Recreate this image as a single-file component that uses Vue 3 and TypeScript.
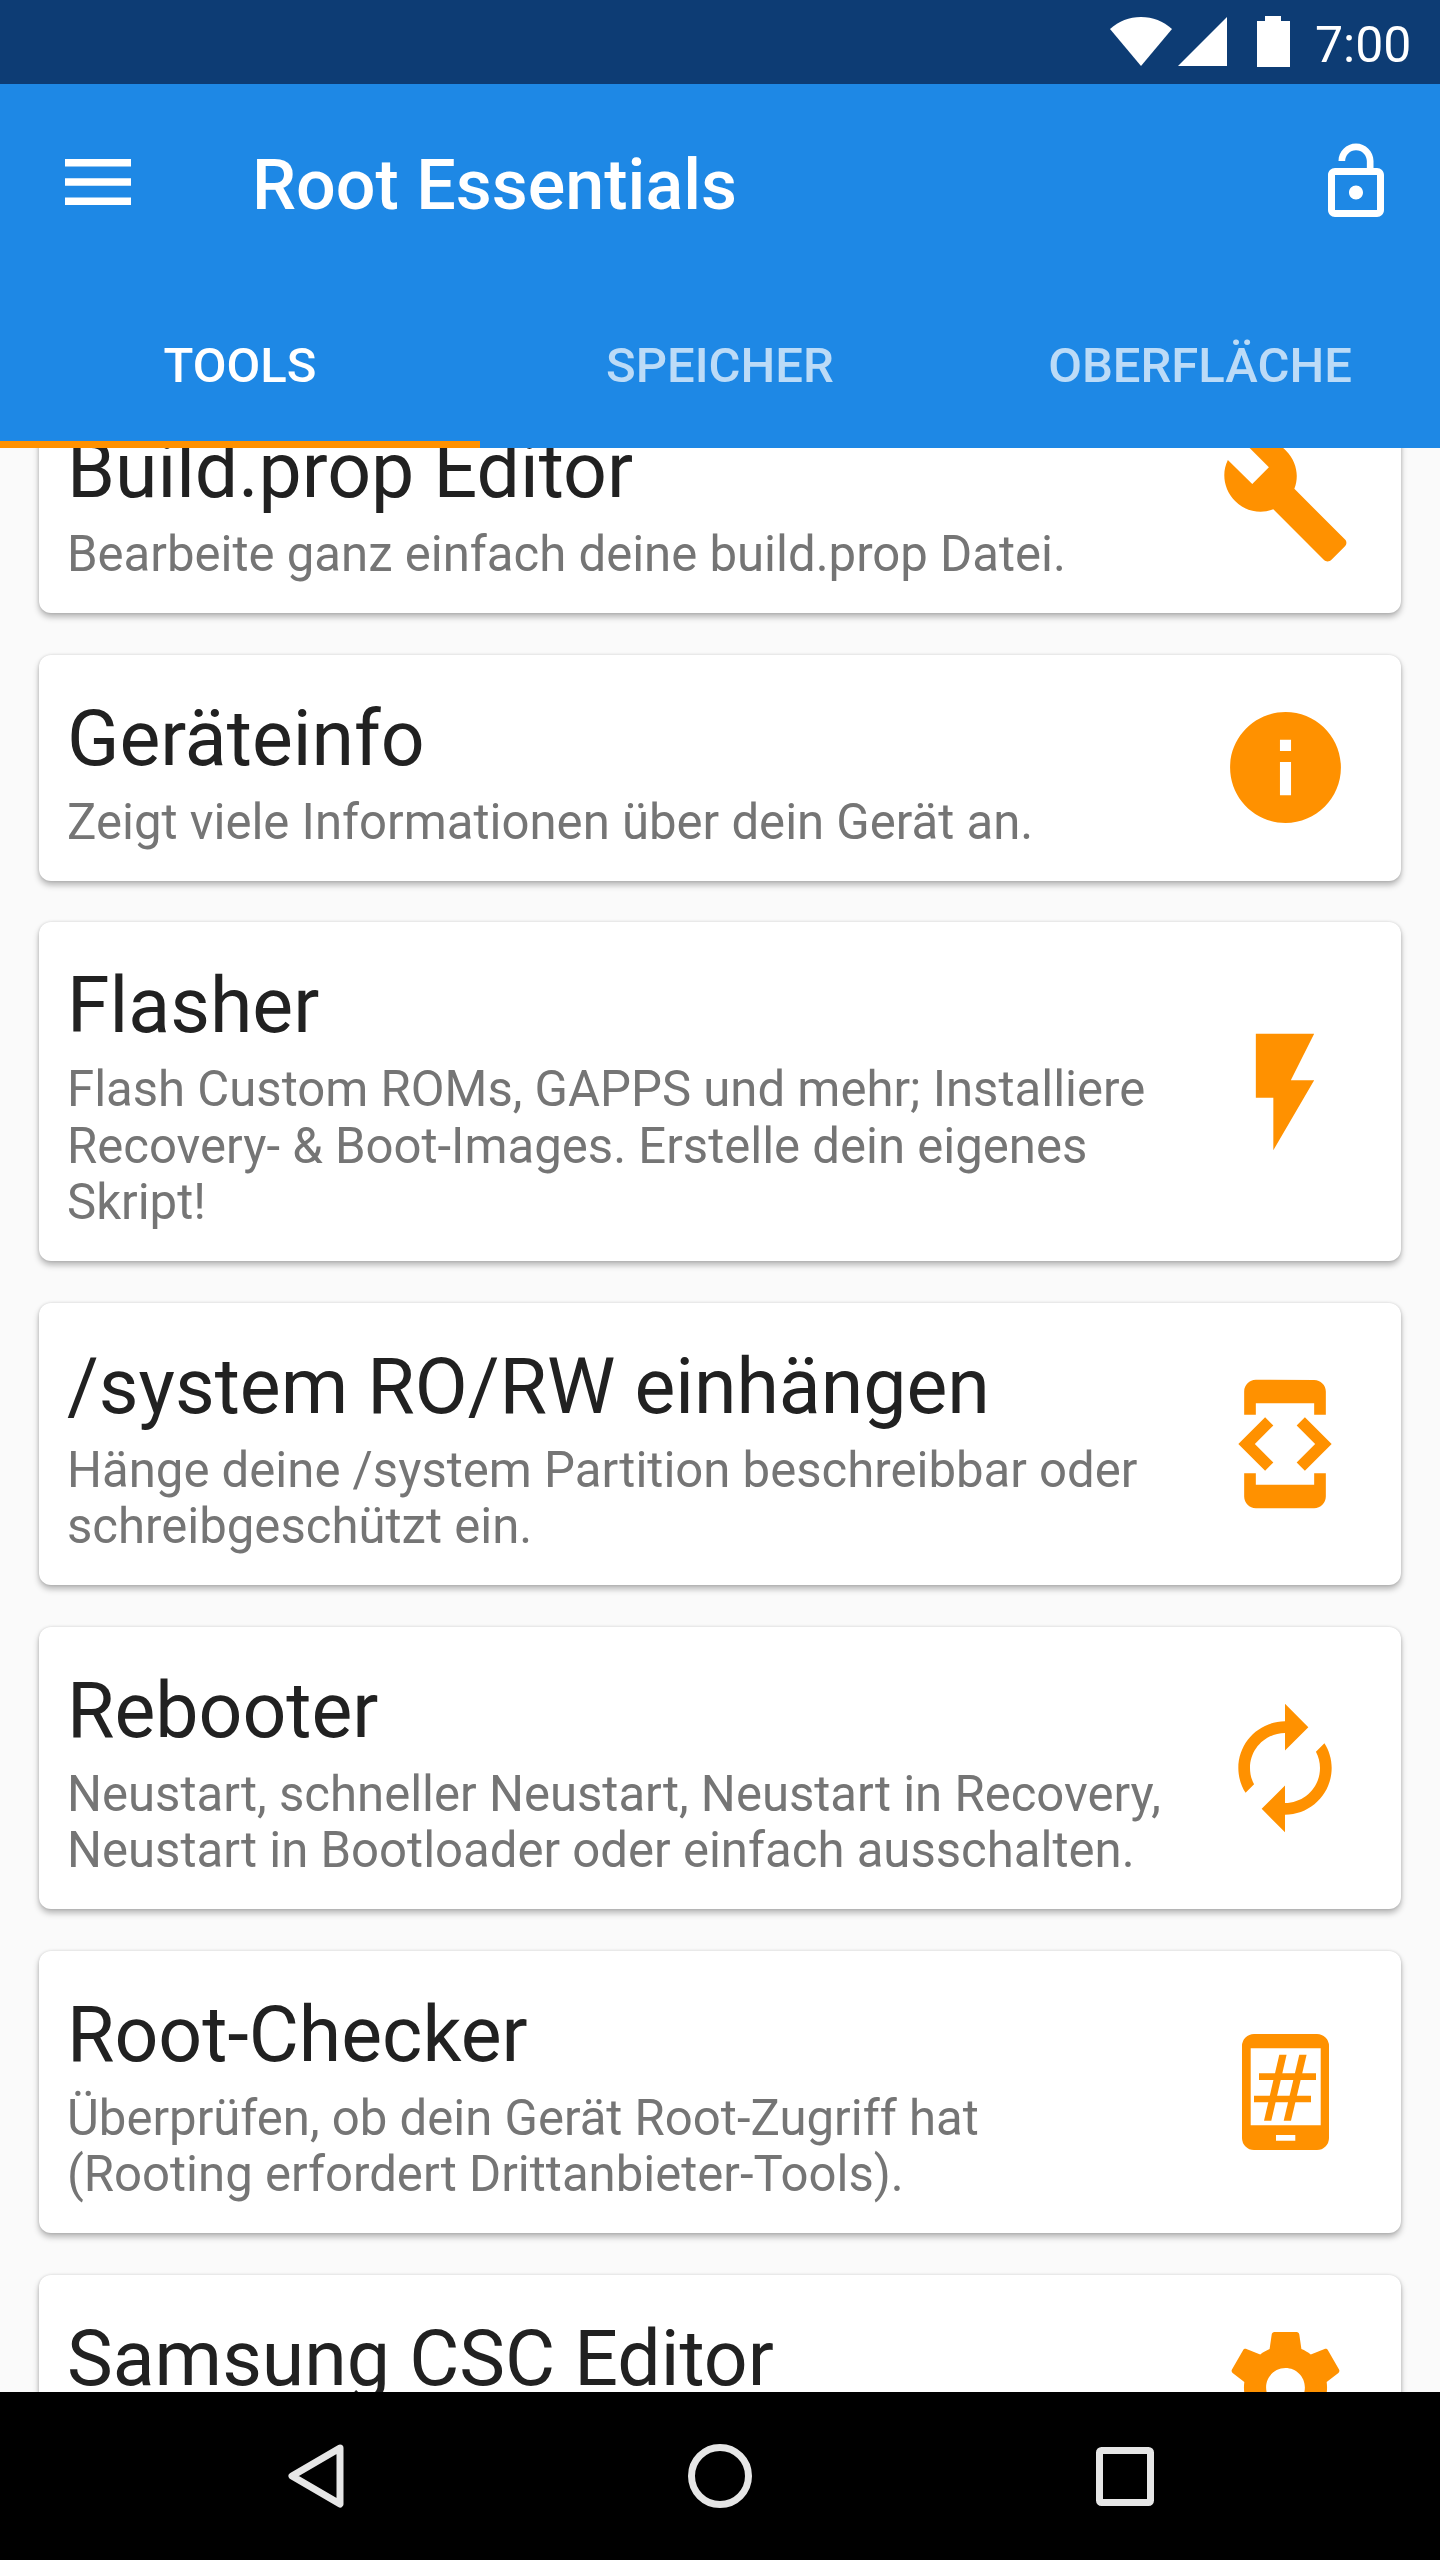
<template>
  <div class="screen">
    <div class="status-bar">
      <svg class="wifi" viewBox="0 0 62 49"><path d="M0 12C9 4 19 0 31 0s22 4 31 12L31 49z" /></svg>
      <svg class="signal" viewBox="0 0 49 49"><path d="M49 0v49H0z" /></svg>
      <svg class="battery" viewBox="0 0 33 51"><path d="M8 0h16v5h9v46H0V5h8z" /></svg>
      <span class="clock">7:00</span>
    </div>

    <header class="app-bar">
      <div class="toolbar">
        <svg class="menu" viewBox="0 0 66 46">
          <rect y="0" width="66" height="7.5" />
          <rect y="19.25" width="66" height="7.5" />
          <rect y="38.5" width="66" height="7.5" />
        </svg>
        <h1 class="app-title">Root Essentials</h1>
        <svg class="lock" viewBox="0 0 24 24">
          <path d="M12 17c1.1 0 2-.9 2-2s-.9-2-2-2-2 .9-2 2 .9 2 2 2zm6-9h-1V6c0-2.76-2.24-5-5-5S7 3.24 7 6h1.9c0-1.71 1.39-3.1 3.1-3.1 1.71 0 3.1 1.39 3.1 3.1v2H6c-1.1 0-2 .9-2 2v10c0 1.1.9 2 2 2h12c1.1 0 2-.9 2-2V10c0-1.1-.9-2-2-2zm0 12H6V10h12v10z" />
        </svg>
      </div>
      <nav class="tabs">
        <div v-for="(tab, i) in tabs" :key="tab" class="tab" :class="{ active: i === 0 }">{{ tab }}</div>
      </nav>
    </header>

    <main class="content">
      <div class="list">
        <section v-for="tool in tools" :key="tool.title" class="card">
          <div class="card-text">
            <h2 class="card-title">{{ tool.title }}</h2>
            <p v-if="tool.desc" class="card-desc">{{ tool.desc }}</p>
          </div>
          <div class="card-icon">
            <svg :class="tool.small ? 'icon-small' : 'icon'" :viewBox="tool.viewBox ?? '0 0 24 24'">
              <path v-for="d in tool.paths" :key="d" :d="d" fill-rule="evenodd" />
            </svg>
          </div>
        </section>
      </div>
    </main>

    <footer class="nav-bar">
      <svg class="nav-back" viewBox="0 0 56 64">
        <path d="M52 4 4 32l0 0 48 28z" />
      </svg>
      <svg class="nav-home" viewBox="0 0 64 64"><circle cx="32" cy="32" r="28.5" /></svg>
      <svg class="nav-recent" viewBox="0 0 58 59"><rect x="3.5" y="3.5" width="51" height="52" rx="2" /></svg>
    </footer>
  </div>
</template>

<script setup lang="ts">
interface Tool {
  title: string;
  desc?: string;
  paths: string[];
  viewBox?: string;
  small?: boolean;
}

const tabs = ['TOOLS', 'SPEICHER', 'OBERFLÄCHE'];

const tools: Tool[] = [
  {
    title: 'Build.prop Editor',
    desc: 'Bearbeite ganz einfach deine build.prop Datei.',
    small: true,
    paths: [
      'M22.7 19l-9.1-9.1c.9-2.3.4-5-1.5-6.9-2-2-5-2.4-7.4-1.3L9 6 6 9 1.6 4.7C.4 7.1.9 10.1 2.9 12.1c1.9 1.9 4.6 2.4 6.9 1.5l9.1 9.1c.4.4 1 .4 1.4 0l2.3-2.3c.5-.4.5-1.1.1-1.4z',
    ],
  },
  {
    title: 'Geräteinfo',
    desc: 'Zeigt viele Informationen über dein Gerät an.',
    small: true,
    paths: ['M12 2C6.48 2 2 6.48 2 12s4.48 10 10 10 10-4.48 10-10S17.52 2 12 2zm1 15h-2v-6h2v6zm0-8h-2V7h2v2z'],
  },
  {
    title: 'Flasher',
    desc: 'Flash Custom ROMs, GAPPS und mehr; Installiere Recovery- & Boot-Images. Erstelle dein eigenes Skript!',
    paths: ['M7 2v11h3v9l7-12h-4l4-8z'],
  },
  {
    title: '/system RO/RW einhängen',
    desc: 'Hänge deine /system Partition beschreibbar oder schreibgeschützt ein.',
    paths: [
      'M7 5h10v2h2V3c0-1.1-.9-1.99-2-1.99L7 1c-1.1 0-2 .9-2 2v4h2V5zm8.41 11.59L20 12l-4.59-4.59L14 8.83 17.17 12 14 15.17l1.41 1.42zM10 15.17L6.83 12 10 8.83 8.59 7.41 4 12l4.59 4.59L10 15.17zM17 19H7v-2H5v4c0 1.1.9 2 2 2h10c1.1 0 2-.9 2-2v-4h-2v2z',
    ],
  },
  {
    title: 'Rebooter',
    desc: 'Neustart, schneller Neustart, Neustart in Recovery, Neustart in Bootloader oder einfach ausschalten.',
    paths: [
      'M12 6v3l4-4-4-4v3c-4.42 0-8 3.58-8 8 0 1.57.46 3.03 1.24 4.26L6.7 14.8c-.45-.83-.7-1.79-.7-2.8 0-3.31 2.69-6 6-6zm6.76 1.74L17.3 9.2c.44.84.7 1.79.7 2.8 0 3.31-2.69 6-6 6v-3l-4 4 4 4v-3c4.42 0 8-3.58 8-8 0-1.57-.46-3.03-1.24-4.26z',
    ],
  },
  {
    title: 'Root-Checker',
    desc: 'Überprüfen, ob dein Gerät Root-Zugriff hat (Rooting erfordert Drittanbieter-Tools).',
    viewBox: '0 0 140 140',
    paths: [
      'M39 12h63a12 12 0 0 1 12 12v92a12 12 0 0 1-12 12H39a12 12 0 0 1-12-12V24a12 12 0 0 1 12-12zM35.7 26.3v77h70v-77zM61 113v5.7h19.3V113z',
      'M44 51.3h57V58H44z',
      'M39 73.7h57v6.6H39z',
      'M64.3 32.7h7.3L56.3 98.7H49z',
      'M84.3 32.7h7.3L76 98.7h-7.3z',
    ],
  },
  {
    title: 'Samsung CSC Editor',
    small: true,
    paths: [
      'M19.43 12.98c.04-.32.07-.64.07-.98s-.03-.66-.07-.98l2.11-1.65c.19-.15.24-.42.12-.64l-2-3.46c-.12-.22-.39-.3-.61-.22l-2.49 1c-.52-.4-1.08-.73-1.69-.98l-.38-2.65C14.46 2.18 14.25 2 14 2h-4c-.25 0-.46.18-.49.42l-.38 2.65c-.61.25-1.17.59-1.69.98l-2.49-1c-.23-.09-.49 0-.61.22l-2 3.46c-.13.22-.07.49.12.64l2.11 1.65c-.04.32-.07.65-.07.98s.03.66.07.98l-2.11 1.65c-.19.15-.24.42-.12.64l2 3.46c.12.22.39.3.61.22l2.49-1c.52.4 1.08.73 1.69.98l.38 2.65c.03.24.24.42.49.42h4c.25 0 .46-.18.49-.42l.38-2.65c.61-.25 1.17-.59 1.69-.98l2.49 1c.23.09.49 0 .61-.22l2-3.46c.12-.22.07-.49-.12-.64l-2.11-1.65zM12 15.5c-1.93 0-3.5-1.57-3.5-3.5s1.57-3.5 3.5-3.5 3.5 1.57 3.5 3.5-1.57 3.5-3.5 3.5z',
    ],
  },
];
</script>

<style scoped>
.screen {
  display: flex;
  flex-direction: column;
  width: 1440px;
  height: 2560px;
  background: #fafafa;
  font-family: Roboto, "Noto Sans", sans-serif;
  overflow: hidden;
}

.status-bar {
  display: flex;
  flex: none;
  align-items: flex-start;
  height: 84px;
  background: #0d3c74;
  color: #fff;
  fill: #fff;
}

.wifi {
  width: 62px;
  height: 49px;
  margin: 17px 0 0 1110px;
}

.signal {
  width: 49px;
  height: 49px;
  margin: 17px 0 0 6px;
}

.battery {
  width: 33px;
  height: 51px;
  margin: 16px 0 0 30px;
}

.clock {
  margin: 16px 0 0 25px;
  font-size: 50px;
  line-height: 58px;
}

.app-bar {
  flex: none;
  position: relative;
  z-index: 1;
  height: 364px;
  background: #1e88e5;
}

.toolbar {
  display: flex;
  align-items: center;
  height: 196px;
  padding: 0 42px 0 65px;
  fill: #fff;
}

.menu {
  flex: none;
  width: 66px;
  height: 46px;
}

.app-title {
  flex: 1;
  margin: 6px 0 0 121px;
  color: #fff;
  font-size: 70px;
  font-weight: 500;
}

.lock {
  flex: none;
  width: 84px;
  height: 84px;
}

.tabs {
  display: grid;
  grid-template-columns: repeat(3, 1fr);
  height: 168px;
}

.tab {
  display: flex;
  align-items: center;
  justify-content: center;
  box-sizing: border-box;
  padding-top: 3px;
  color: rgb(255 255 255 / 70%);
  font-size: 49px;
  font-weight: 500;
}

.tab.active {
  color: #fff;
  border-bottom: 7px solid #ff9100;
  padding-top: 10px;
}

.content {
  flex: 1;
  min-height: 0;
  overflow: hidden;
}

.list {
  display: flex;
  flex-direction: column;
  gap: 41.5px;
  margin-top: -61px;
  padding: 0 39px;
}

.card {
  display: flex;
  flex: none;
  min-height: 226px;
  background: #fff;
  border-radius: 12px;
  box-shadow: 0 4px 6px rgb(0 0 0 / 28%), 0 0 3px rgb(0 0 0 / 14%);
}

.card-text {
  flex: 1;
  min-width: 0;
  padding: 35px 0 30.5px 28px;
}

.card-title {
  margin: 0;
  color: #212121;
  font-size: 77px;
  font-weight: 400;
  line-height: 98px;
}

.card-desc {
  margin: 6px 0 0;
  color: #757575;
  font-size: 49.1px;
  line-height: 56.5px;
}

.card-icon {
  display: flex;
  flex: none;
  align-items: center;
  justify-content: center;
  width: 140px;
  margin: 0 46px 0 50px;
  fill: #ff9100;
}

.icon {
  width: 140px;
  height: 140px;
}

.icon-small {
  width: 133px;
  height: 133px;
}

.nav-bar {
  display: flex;
  flex: none;
  align-items: center;
  height: 168px;
  padding: 0 0 0 288px;
  background: #000;
  fill: none;
  stroke: #e6e6e6;
}

.nav-back {
  width: 56px;
  height: 64px;
  stroke-width: 7px;
  stroke-linejoin: round;
}

.nav-home {
  width: 64px;
  height: 64px;
  margin-left: 344px;
  stroke-width: 7px;
}

.nav-recent {
  width: 58px;
  height: 59px;
  margin-left: 344px;
  stroke-width: 7px;
}
</style>

<style>
html,
body {
  margin: 0;
  padding: 0;
}
</style>
